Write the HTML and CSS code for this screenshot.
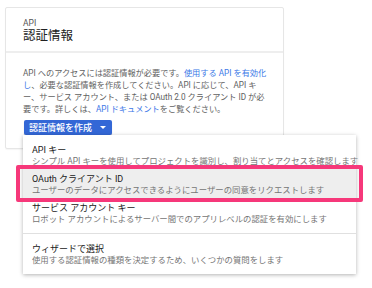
FILE: index.html
```html
<!DOCTYPE html>
<html lang="ja">
<head>
    <meta charset="UTF-8">
    <meta name="viewport" content="width=device-width, initial-scale=1.0">
    <title>認証情報</title>
    <link rel="stylesheet" href="styles.css">
</head>
<body>
    <div class="card">
        <div class="card-header">
            <div class="eyebrow">API</div>
            <h1>認証情報</h1>
        </div>
        <div class="card-body">
            <p class="intro">
                API へのアクセスには認証情報が必要です。<a href="#">使用する API を有効化<br>し</a>、必要な認証情報を作成してください。API に応じて、API キ<br>ー、サービス アカウント、または OAuth 2.0 クライアント ID が必<br>要です。詳しくは、<a href="#">API ドキュメント</a>をご覧ください。
            </p>
            <div class="create">
                <button class="create-btn">認証情報を作成<span class="caret"></span></button>
                <ul class="menu">
                    <li class="menu-item">
                        <div class="item-title">API キー</div>
                        <div class="item-desc">シンプル API キーを使用してプロジェクトを識別し、割り当てとアクセスを確認します</div>
                    </li>
                    <li class="menu-item selected">
                        <div class="item-title">OAuth クライアント ID</div>
                        <div class="item-desc">ユーザーのデータにアクセスできるようにユーザーの同意をリクエストします</div>
                    </li>
                    <li class="menu-item">
                        <div class="item-title">サービス アカウント キー</div>
                        <div class="item-desc">ロボット アカウントによるサーバー間でのアプリレベルの認証を有効にします</div>
                    </li>
                    <li class="menu-divider"></li>
                    <li class="menu-item">
                        <div class="item-title">ウィザードで選択</div>
                        <div class="item-desc">使用する認証情報の種類を決定するため、いくつかの質問をします</div>
                    </li>
                </ul>
            </div>
        </div>
    </div>
</body>
</html>
```

FILE: styles.css
```css
html, body {
    height: 100%;
}

body {
    margin: 0;
    padding: 7px 0 0 5px;
    box-sizing: border-box;
    min-height: 288px;
    font-family: Roboto, "Noto Sans CJK JP", sans-serif;
    background-color: #ffffff;
    color: #212121;
}

.card {
    width: 279px;
    box-sizing: border-box;
    border: 1px solid #e6e6e6;
    border-radius: 2px;
    box-shadow: 0 1px 1px rgba(0, 0, 0, 0.04);
}

.card-header {
    padding: 10px 17px 7px;
    border-bottom: 2px solid #eeeeee;
}

.eyebrow {
    font-size: 8.5px;
    line-height: 10px;
    color: #555555;
}

h1 {
    margin: 0;
    font-size: 12.5px;
    line-height: 16px;
    font-weight: normal;
    color: #212121;
}

.card-body {
    padding: 14px 17px 13px;
}

.intro {
    margin: 0;
    font-size: 8.2px;
    line-height: 12px;
    color: #616161;
    white-space: nowrap;
}

.intro a {
    color: #3b78e7;
    text-decoration: none;
}

.create {
    position: relative;
    margin-top: 5px;
    display: inline-block;
}

.create-btn {
    display: flex;
    align-items: center;
    height: 15px;
    padding: 0 6px 0 5px;
    margin-left: 1px;
    border: none;
    border-radius: 2px;
    background-color: #3367d6;
    color: #ffffff;
    font-family: inherit;
    font-size: 9px;
    font-weight: 500;
    box-shadow: 0 1px 1px rgba(0, 0, 0, 0.2);
}

.caret {
    margin-left: 8px;
    border-left: 3px solid transparent;
    border-right: 3px solid transparent;
    border-top: 3px solid #ffffff;
}

.menu {
    position: absolute;
    top: 15px;
    left: 0;
    width: 333px;
    box-sizing: border-box;
    margin: 0;
    padding: 5px 0 6px;
    list-style: none;
    background-color: #ffffff;
    box-shadow: 0 1px 4px rgba(0, 0, 0, 0.3);
}

.menu-item {
    position: relative;
    height: 29px;
    box-sizing: border-box;
    padding: 4px 9px 0;
}

.menu-item.selected {
    background-color: #eeeeee;
}

.menu-item.selected::after {
    content: "";
    position: absolute;
    top: -4px;
    bottom: -4px;
    left: -7px;
    right: -7px;
    border: 4px solid #f6387a;
    border-radius: 2px;
}

.item-title {
    font-size: 9px;
    line-height: 12px;
    color: #212121;
}

.item-desc {
    font-size: 8.4px;
    line-height: 11px;
    color: #757575;
    white-space: nowrap;
}

.menu-divider {
    height: 1px;
    margin: 6px 0 5px;
    background-color: #e0e0e0;
}
```
